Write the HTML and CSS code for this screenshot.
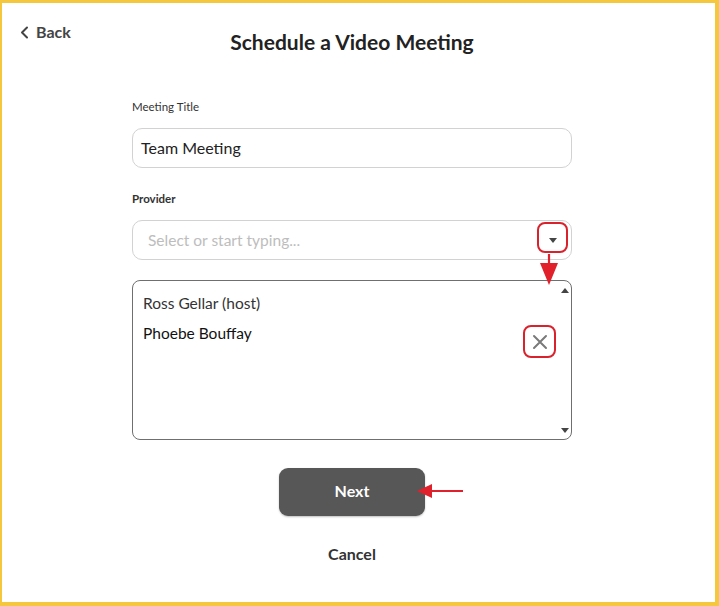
FILE: index.html
```html
<!DOCTYPE html>
<html lang="en">
<head>
<meta charset="utf-8">
<title>Schedule a Video Meeting</title>
<link rel="stylesheet" href="styles.css">
</head>
<body>
<div class="frame">
  <div class="side">
    <a class="back" href="#">
      <svg class="chev" width="9" height="13" viewBox="0 0 9 13"><path d="M7 1.5 L2 6.5 L7 11.5" fill="none" stroke="#444" stroke-width="2" stroke-linecap="round" stroke-linejoin="round"/></svg>
      <span>Back</span>
    </a>
  </div>
  <main class="main">
    <h1 class="title">Schedule a Video Meeting</h1>

    <label class="label">Meeting Title</label>
    <div class="input"><span class="value">Team Meeting</span></div>

    <label class="label label-provider">Provider</label>
    <div class="input select">
      <span class="placeholder">Select or start typing...</span>
      <span class="caret-box">
        <span class="caret"></span>
      </span>
      <svg class="arrow-down" width="20" height="32" viewBox="0 0 20 32"><path d="M10 0 V10" stroke="#e0202a" stroke-width="2.2"/><path d="M1 9 H19 L10 31 Z" fill="#e0202a"/></svg>
    </div>

    <div class="list">
      <div class="rows">
        <div class="row host">Ross Gellar (host)</div>
        <div class="row">
          <span class="name">Phoebe Bouffay</span>
          <span class="remove">
            <svg width="16" height="16" viewBox="0 0 16 16"><path d="M2 2 L14 14 M14 2 L2 14" stroke="#7a7a7a" stroke-width="2" stroke-linecap="round"/></svg>
          </span>
        </div>
      </div>
      <div class="scroll">
        <span class="tri up"></span>
        <span class="tri down"></span>
      </div>
    </div>

    <div class="actions">
      <div class="next-wrap">
        <button class="next">Next</button>
        <svg class="arrow-left" width="48" height="16" viewBox="0 0 48 16"><path d="M12 8 H46" stroke="#e0202a" stroke-width="2.2"/><path d="M0 8 L15 1 L15 15 Z" fill="#e0202a"/></svg>
      </div>
      <button class="cancel">Cancel</button>
    </div>
  </main>
</div>
</body>
</html>
```

FILE: styles.css
```css
* { box-sizing: border-box; }
html, body { margin: 0; padding: 0; background: #fff; }
body { font-family: Lato, "Noto Sans", sans-serif; color: #222; }

.frame {
  width: 719px;
  height: 606px;
  border-style: solid;
  border-color: #f5c73c;
  border-width: 3px 4px 4px 2px;
  display: grid;
  grid-template-columns: 130px 440px;
  align-items: start;
}

.side { padding: 19px 0 0 18px; }
.back {
  display: flex;
  align-items: center;
  gap: 7px;
  text-decoration: none;
  color: #444;
  font-size: 16px;
  font-weight: 700;
  line-height: 20px;
}
.chev { display: block; }

.main { display: flex; flex-direction: column; }

.title {
  margin: 27px 0 0;
  font-size: 21px;
  line-height: 24px;
  font-weight: 700;
  text-align: center;
  color: #222;
}

.label {
  display: block;
  margin-top: 46px;
  font-size: 11.5px;
  line-height: 14px;
  color: #333;
}
.label-provider { margin-top: 24px; font-weight: 700; }

.input {
  margin-top: 14px;
  height: 40px;
  border: 1px solid #d2d2d2;
  border-radius: 10px;
  display: flex;
  align-items: center;
  padding: 0 8px 2px;
  position: relative;
}
.value { font-size: 16px; color: #222; }
.select { padding: 0 3px 0 15px; justify-content: space-between; }
.placeholder { font-size: 15.5px; color: #bdbdbd; }
.caret-box {
  width: 31px;
  height: 31px;
  border: 2px solid #d9222c;
  border-radius: 8px;
  display: flex;
  align-items: center;
  justify-content: center;
  margin-top: -5px;
}
.caret {
  width: 0; height: 0;
  border-left: 4.5px solid transparent;
  border-right: 4.5px solid transparent;
  border-top: 5px solid #444;
  margin-top: 6px;
}
.arrow-down {
  position: absolute;
  right: 12px;
  top: 33px;
}

.list {
  margin-top: 20px;
  height: 160px;
  border: 1px solid #6f6f6f;
  border-radius: 8px;
  display: flex;
}
.rows { flex: 1; padding: 12px 0 0 10px; display: flex; flex-direction: column; }
.row {
  display: flex;
  justify-content: space-between;
  align-items: flex-start;
  font-size: 15.5px;
  line-height: 20px;
  color: #333;
  margin-bottom: 10px;
}
.row .name { color: #111; }
.remove {
  width: 33px;
  height: 33px;
  border: 2px solid #d9222c;
  border-radius: 8px;
  display: flex;
  align-items: center;
  justify-content: center;
  margin: 2px 3px 0 0;
}
.remove svg { display: block; }
.scroll {
  width: 12px;
  display: flex;
  flex-direction: column;
  justify-content: space-between;
  align-items: center;
  padding: 7px 0 6px;
}
.tri { width: 0; height: 0; border-left: 4.5px solid transparent; border-right: 4.5px solid transparent; }
.tri.up { border-bottom: 5px solid #444; }
.tri.down { border-top: 5px solid #444; }

.actions { display: flex; flex-direction: column; align-items: center; }
.next-wrap { position: relative; margin-top: 28px; }
.next {
  display: block;
  width: 146px;
  height: 48px;
  border: none;
  border-radius: 9px;
  background: #575757;
  color: #fff;
  font-family: inherit;
  font-size: 16px;
  font-weight: 700;
  padding: 0 0 4px;
  box-shadow: 0 1px 2px rgba(0,0,0,0.25);
}
.arrow-left { position: absolute; left: 138px; top: 15px; }
.cancel {
  margin-top: 28px;
  background: none;
  border: none;
  padding: 0;
  font-family: inherit;
  font-size: 16px;
  line-height: 20px;
  font-weight: 700;
  color: #333;
}
```
